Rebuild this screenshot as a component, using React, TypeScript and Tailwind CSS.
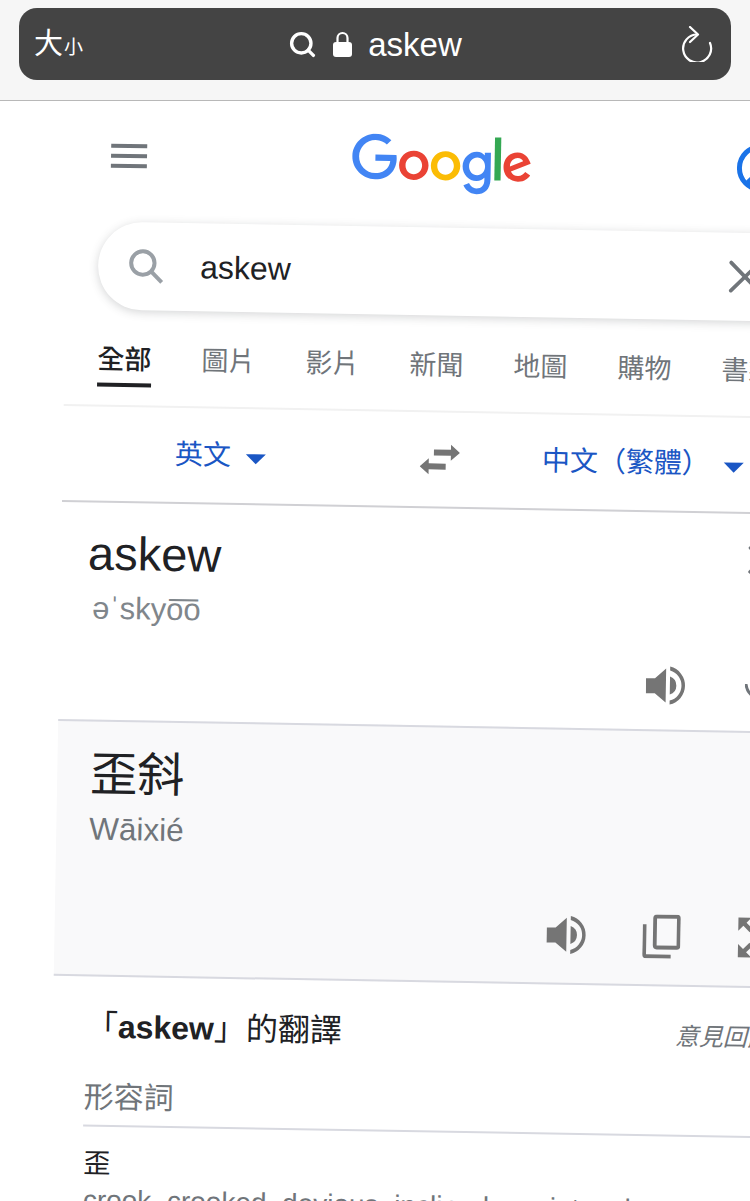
import React from 'react';
import { Search, X } from 'lucide-react';

const TABS = ['全部', '圖片', '影片', '新聞', '地圖', '購物', '書籍'];

const SANS = 'font-["Liberation_Sans","Noto_Sans_CJK_TC",sans-serif]';

function GoogleLogo() {
  return (
    <svg viewBox="0 0 272 92" className="w-[180px] h-[61px]">
      <path fill="#EA4335" d="M115.75 47.18c0 12.77-9.99 22.18-22.25 22.18s-22.25-9.41-22.25-22.18C71.25 34.32 81.24 25 93.5 25s22.25 9.32 22.25 22.18zm-9.74 0c0-7.98-5.79-13.44-12.51-13.44S80.99 39.2 80.99 47.18c0 7.9 5.79 13.44 12.51 13.44s12.51-5.55 12.51-13.44z" />
      <path fill="#FBBC05" d="M163.75 47.18c0 12.77-9.99 22.18-22.25 22.18s-22.25-9.41-22.25-22.18c0-12.85 9.99-22.18 22.25-22.18s22.25 9.32 22.25 22.18zm-9.74 0c0-7.98-5.79-13.44-12.51-13.44s-12.51 5.46-12.51 13.44c0 7.9 5.79 13.44 12.51 13.44s12.51-5.55 12.51-13.44z" />
      <path fill="#4285F4" d="M209.75 26.34v39.82c0 16.38-9.66 23.07-21.08 23.07-10.75 0-17.22-7.19-19.66-13.07l8.48-3.53c1.51 3.61 5.21 7.87 11.17 7.87 7.31 0 11.84-4.51 11.84-13v-3.19h-.34c-2.18 2.69-6.38 5.04-11.68 5.04-11.09 0-21.25-9.66-21.25-22.09 0-12.52 10.16-22.26 21.25-22.26 5.29 0 9.49 2.35 11.68 4.96h.34v-3.61h9.25zm-8.56 20.92c0-7.81-5.21-13.52-11.84-13.52-6.72 0-12.35 5.71-12.35 13.52 0 7.73 5.63 13.36 12.35 13.36 6.63 0 11.84-5.63 11.84-13.36z" />
      <path fill="#34A853" d="M225 3v65h-9.5V3h9.5z" />
      <path fill="#EA4335" d="M262.02 54.48l7.56 5.04c-2.44 3.61-8.32 9.83-18.48 9.83-12.6 0-22.01-9.74-22.01-22.18 0-13.19 9.49-22.18 20.92-22.18 11.51 0 17.14 9.16 18.98 14.11l1.01 2.52-29.65 12.28c2.27 4.45 5.8 6.72 10.75 6.72 4.96 0 8.4-2.44 10.92-6.14zm-23.27-7.98l19.82-8.23c-1.09-2.77-4.37-4.7-8.23-4.7-4.95 0-11.84 4.37-11.59 12.93z" />
      <path fill="#4285F4" d="M35.29 41.41V32H67c.31 1.64.47 3.58.47 5.68 0 7.06-1.93 15.79-8.15 22.01-6.05 6.3-13.78 9.66-24.02 9.66C16.32 69.35.36 53.89.36 34.91.36 15.93 16.32.47 35.3.47c10.5 0 17.98 4.12 23.6 9.49l-6.64 6.64c-4.03-3.78-9.49-6.72-16.97-6.72-13.86 0-24.7 11.17-24.7 25.03 0 13.86 10.84 25.03 24.7 25.03 8.99 0 14.11-3.61 17.39-6.89 2.66-2.66 4.41-6.46 5.1-11.65l-22.49.01z" />
    </svg>
  );
}

function Speaker() {
  return (
    <svg viewBox="0 0 41 40" className="w-[41px] h-[40px]" fill="#757575">
      <path d="M0 13H9L20 3V37L9 28H0z" />
      <path d="M24 11A9.5 9.5 0 0 1 24 29z" />
      <path d="M24 1A19.5 19.5 0 0 1 24 39V35A15.5 15.5 0 0 0 24 5z" />
    </svg>
  );
}

function Caret({ className = '' }: { className?: string }) {
  return <div className={`w-0 h-0 border-x-[10px] border-x-transparent border-t-[10px] border-t-[#1a56c4] ${className}`} />;
}

export default function App() {
  return (
    <div className={`w-[750px] h-[1201px] overflow-hidden bg-white flex flex-col ${SANS}`}>
      {/* safari address bar */}
      <div className="h-[101px] shrink-0 bg-[#f6f6f6] border-b border-[#b8b8b8] pt-2 pl-[19px] pr-[19px] relative z-10">
        <div className="h-[72px] rounded-[18px] bg-[#444444] text-white flex items-center justify-between pl-[15px] pr-[18px]">
          <div className="flex items-baseline w-[60px]">
            <span className="text-[29px] leading-none">大</span>
            <span className="text-[19px] leading-none ml-px">小</span>
          </div>
          <div className="flex items-center mr-[25px]">
            <Search className="w-[29px] h-[29px]" strokeWidth={2.8} />
            <svg viewBox="0 0 19 26" className="w-[19px] h-[26px] ml-[16px]">
              <path d="M4.5 12V7a5 5 0 0 1 10 0v5" fill="none" stroke="white" strokeWidth="2.2" />
              <rect x="0" y="11" width="19" height="15" rx="3" fill="white" />
            </svg>
            <span className="text-[33px] ml-[16px] leading-none">askew</span>
          </div>
          <svg viewBox="0 0 32 36" className="w-[32px] h-[36px]" fill="none" stroke="white" strokeWidth="2.2" strokeLinecap="round" strokeLinejoin="round">
            <path d="M9 1l8 7.5-8 7.5" />
            <path d="M16 8.5A14 14 0 1 0 29 17" />
          </svg>
        </div>
      </div>

      <div className="flex-1 relative overflow-hidden">
        {/* the whole page is tilted in the shot */}
        <div className="w-[860px] ml-[69px] origin-top-left rotate-[1deg]">
          <div className="flex items-start pt-[27px] h-[120px]">
            <div className="ml-[43px] mt-[15px] w-[36px] flex flex-col gap-[6px]">
              <div className="h-[4px] bg-[#70757a]" />
              <div className="h-[4px] bg-[#70757a]" />
              <div className="h-[4px] bg-[#70757a]" />
            </div>
            <div className="ml-[205px]"><GoogleLogo /></div>
            <svg viewBox="0 0 48 48" className="ml-[205px] mt-[4px] w-[48px] h-[48px]">
              <circle cx="24" cy="24" r="21.5" fill="none" stroke="#1a73e8" strokeWidth="5" />
              <path d="M8 40Q12 30 24 30T40 40z" fill="#1a73e8" />
            </svg>
          </div>

          <div className="ml-[32px] h-[88px] w-[800px] rounded-full bg-white shadow-[0_2px_10px_rgba(60,64,67,0.22)] flex items-center">
            <svg viewBox="0 0 24 24" className="w-[40px] h-[40px] ml-[28px]" fill="none" stroke="#9aa0a6" strokeWidth="2.4">
              <circle cx="10" cy="10" r="7" />
              <path d="M15 15l6.5 6.5" />
            </svg>
            <span className="ml-[34px] text-[32px] text-[#202124]">askew</span>
            <X className="w-[56px] h-[56px] ml-[426px] text-[#70757a]" strokeWidth={1.6} />
          </div>

          <div className="ml-[33px] mt-[30px] flex gap-[50px] h-[65px]">
            {TABS.map((t, i) => (
              <div key={t} className={`w-[54px] shrink-0 flex flex-col text-[27px] leading-[40px] whitespace-nowrap ${i === 0 ? 'text-[#202124] font-medium' : 'text-[#70757a]'}`}>
                {t}
                {i === 0 && <div className="h-[4px] mt-[3px] bg-[#202124]" />}
              </div>
            ))}
          </div>

          <div className="border-t-2 border-[#f1f1f1] h-[96px] flex items-center">
            <span className="ml-[112px] text-[28px] text-[#1a56c4]">英文</span>
            <Caret className="ml-[15px] mt-[6px]" />
            <svg viewBox="0 0 40 32" className="w-[40px] h-[32px] ml-[154px]" fill="#757575">
              <path d="M0 23l9-8v5h17v6H9v5z" />
              <path d="M40 9l-9-8v5H14v6h17v5z" />
            </svg>
            <span className="ml-[82px] text-[28px] text-[#1a56c4] whitespace-nowrap">中文（繁體）</span>
            <Caret className="ml-[14px] mt-[6px]" />
          </div>

          <div className="border-t-2 border-[#d0d0d4] h-[219px] pl-[27px] relative">
            <div className="text-[47px] leading-[54px] mt-[24px] text-[#202124]">askew</div>
            <div className="text-[31px] leading-[36px] mt-[10px] ml-[5px] text-[#80868b]">əˈskyo͞o</div>
            <X className="absolute left-[677px] top-[22px] w-[48px] h-[48px] text-[#70757a]" strokeWidth={1.6} />
            <div className="absolute left-[587px] top-[153px]"><Speaker /></div>
            <svg viewBox="0 0 12 14" className="absolute left-[686px] top-[170px] w-[12px] h-[14px]" fill="none" stroke="#70757a" strokeWidth="3">
              <path d="M1 0Q2 8 8 12" />
            </svg>
          </div>

          <div className="border-y-2 border-[#d8d9e0] h-[257px] bg-[#f9f9fa] pl-[33px] relative">
            <div className="text-[47px] leading-[54px] mt-[26px] text-[#202124]">歪斜</div>
            <div className="text-[31.5px] leading-[36px] mt-[9px] text-[#70757a]">Wāixié</div>
            <div className="absolute left-[492px] top-[185px]"><Speaker /></div>
            <svg viewBox="0 0 40 44" className="absolute left-[588px] top-[183px] w-[38px] h-[44px]" preserveAspectRatio="none" fill="none" stroke="#757575" strokeWidth="4" strokeLinejoin="round">
              <rect x="13" y="2" width="25" height="31" rx="2" />
              <path d="M2 10V40a2 2 0 0 0 2 2H30" />
            </svg>
            <svg viewBox="0 0 24 24" className="absolute left-[677px] top-[178px] w-[53px] h-[53px]" fill="#757575">
              <path d="M15 3l2.3 2.3-2.89 2.87 1.42 1.42L18.7 6.7 21 9V3zM3 9l2.3-2.3 2.87 2.89 1.42-1.42L6.7 5.3 9 3H3zm6 12l-2.3-2.3 2.89-2.87-1.42-1.42L5.3 17.3 3 15v6zm12-6l-2.3 2.3-2.87-2.89-1.42 1.42 2.89 2.87L15 21h6z" />
            </svg>
          </div>

          <div className="pl-[29px] pt-[30px]">
            <div className="flex items-center h-[40px]">
              <span className="ml-[4px] text-[32px] text-[#202124] whitespace-nowrap">「<b>askew</b>」的翻譯</span>
              <span className="ml-[333px] text-[24px] italic text-[#70757a] whitespace-nowrap">意見回饋</span>
            </div>
            <div className="text-[30px] leading-[40px] mt-[31px] ml-[3px] text-[#70757a]">形容詞</div>
            <div className="h-[2px] mt-[7px] ml-[3px] bg-[#d8d9e0]" />
            <div className="text-[27px] leading-[36px] mt-[19px] ml-[4px] text-[#202124]">歪</div>
            <div className="text-[28px] leading-[36px] mt-[1px] ml-[4px] text-[#70757a] whitespace-nowrap">crook, crooked, devious, inclined, squint, aslant</div>
          </div>
        </div>
      </div>
    </div>
  );
}
